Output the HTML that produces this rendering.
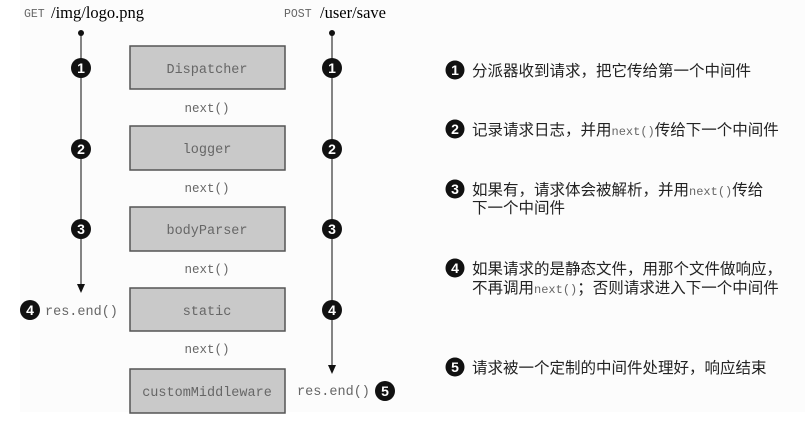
<!DOCTYPE html>
<html><head><meta charset="utf-8"><style>
body{margin:0;width:810px;height:422px;background:#fff;overflow:hidden}
svg{display:block}
.m{font-family:"Liberation Mono",monospace;fill:#666}
.s{font-family:"Liberation Serif",serif;fill:#000}
.c{font-family:"Liberation Sans","Noto Sans CJK SC",sans-serif;fill:#222;font-size:15.5px}
.n{font-family:"Liberation Sans",sans-serif;font-weight:bold;fill:#fff;font-size:14px;text-anchor:middle}
.b{fill:#c9c9c9;stroke:#555;stroke-width:1.5}
</style></head><body>
<svg width="810" height="422" viewBox="0 0 810 422">
<rect x="20" y="0" width="785" height="412" fill="#fcfcfc"/>
<text x="24" y="17" class="m" font-size="11.5">GET</text><text x="51" y="18" class="s" font-size="16.5">/img/logo.png</text>
<text x="284" y="17" class="m" font-size="11.5">POST</text><text x="320" y="18" class="s" font-size="16.5">/user/save</text>
<line x1="81" y1="33" x2="81" y2="286" stroke="#444" stroke-width="1.3"/>
<circle cx="81" cy="33" r="3" fill="#111"/>
<polygon points="77,284 85,284 81,293" fill="#111"/>
<line x1="332" y1="33" x2="332" y2="367" stroke="#444" stroke-width="1.3"/>
<circle cx="332" cy="33" r="3" fill="#111"/>
<polygon points="328,365 336,365 332,374" fill="#111"/>
<g class="b">
<rect x="130" y="46" width="155" height="43"/>
<rect x="130" y="126" width="155" height="44"/>
<rect x="130" y="207" width="155" height="44"/>
<rect x="130" y="288" width="155" height="43"/>
<rect x="130" y="369" width="155" height="44"/>
</g>
<g class="m" font-size="13.5" text-anchor="middle">
<text x="207" y="73">Dispatcher</text>
<text x="207" y="153">logger</text>
<text x="207" y="234">bodyParser</text>
<text x="207" y="315">static</text>
<text x="207" y="396">customMiddleware</text>
<text x="207" y="112" font-size="12.5">next()</text>
<text x="207" y="192" font-size="12.5">next()</text>
<text x="207" y="273" font-size="12.5">next()</text>
<text x="207" y="353" font-size="12.5">next()</text>
</g>
<text x="45" y="315" class="m" font-size="13.5">res.end()</text>
<text x="297" y="395" class="m" font-size="13.5">res.end()</text>
<g fill="#111">
<circle cx="81" cy="68" r="10"/><circle cx="81" cy="149" r="10"/><circle cx="81" cy="229" r="10"/>
<circle cx="332" cy="68" r="10"/><circle cx="332" cy="149" r="10"/><circle cx="332" cy="229" r="10"/><circle cx="332" cy="310" r="10"/>
<circle cx="30" cy="310" r="10"/><circle cx="385" cy="391" r="10"/>
<circle cx="455" cy="70" r="9.5"/><circle cx="455" cy="129" r="9.5"/><circle cx="455" cy="189" r="9.5"/><circle cx="455" cy="268" r="9.5"/><circle cx="455" cy="367" r="9.5"/>
</g>
<g class="n">
<text x="81" y="73">1</text><text x="81" y="154">2</text><text x="81" y="234">3</text>
<text x="332" y="73">1</text><text x="332" y="154">2</text><text x="332" y="234">3</text><text x="332" y="315">4</text>
<text x="30" y="315">4</text><text x="385" y="396">5</text>
<text x="455" y="75">1</text><text x="455" y="134">2</text><text x="455" y="194">3</text><text x="455" y="273">4</text><text x="455" y="372">5</text>
</g>
<text x="472" y="76" class="c">分派器收到请求，把它传给第一个中间件</text>
<text x="472" y="135" class="c">记录请求日志，并用<tspan class="m" font-size="12">next()</tspan>传给下一个中间件</text>
<text x="472" y="195" class="c">如果有，请求体会被解析，并用<tspan class="m" font-size="12">next()</tspan>传给</text>
<text x="472" y="213" class="c">下一个中间件</text>
<text x="472" y="274" class="c">如果请求的是静态文件，用那个文件做响应，</text>
<text x="472" y="293" class="c">不再调用<tspan class="m" font-size="12">next()</tspan>；否则请求进入下一个中间件</text>
<text x="472" y="373" class="c">请求被一个定制的中间件处理好，响应结束</text>
</svg>
</body></html>
